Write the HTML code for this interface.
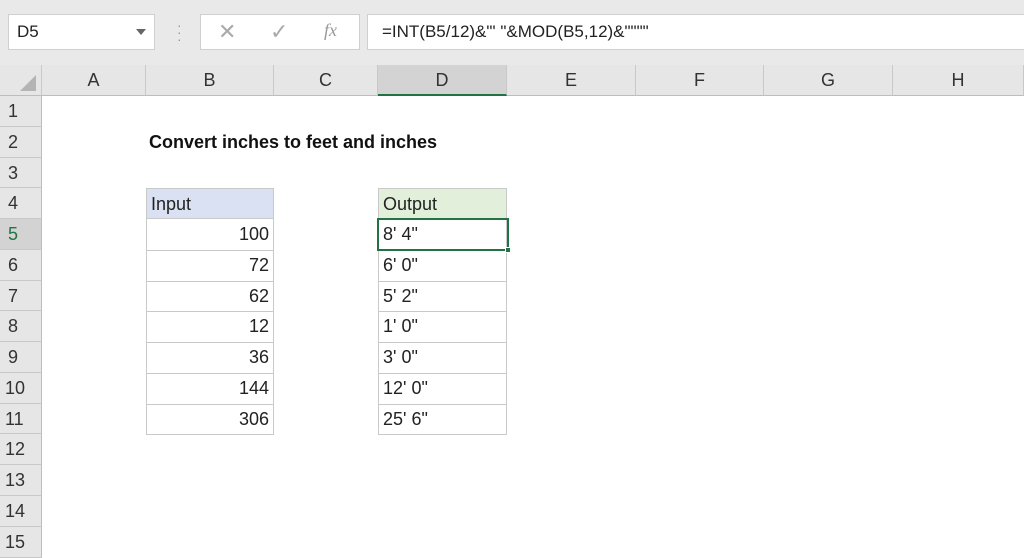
<!DOCTYPE html>
<html><head><meta charset="utf-8"><style>
*{margin:0;padding:0;box-sizing:border-box}
body{width:1024px;height:538px;overflow:hidden;background:#fff;font-family:"Liberation Sans",sans-serif;position:relative;color:#222}
.a{position:absolute}
.tb{left:0;top:0;width:1024px;height:65px;background:#e9e9e9}
.box{background:#fff;border:1px solid #d0d0d0}
.ch{top:65px;height:31px;background:#e6e6e6;border-right:1px solid #c8c8c8;border-bottom:1px solid #bdbdbd;text-align:center;line-height:31px;font-size:18px;color:#333}
.rh{left:0;width:42px;background:#e6e6e6;border-bottom:1px solid #c8c8c8;border-right:1px solid #bdbdbd;text-align:left;padding-left:8px;font-size:18px;color:#333}
.c{font-size:18px;border:1px solid #c9c9c9;padding:0 4px;color:#222}
.r{text-align:right}
</style></head><body>
<div class="a tb"></div>
<div class="a box" style="left:8px;top:14px;width:147px;height:36px;font-size:17px;line-height:34px;padding-left:8px">D5</div>
<div class="a" style="left:136px;top:29px;width:0;height:0;border-left:5px solid transparent;border-right:5px solid transparent;border-top:6px solid #666"></div>
<div class="a" style="left:177px;top:22px;color:#999;font-size:14px;line-height:7px">·<br>·<br>·</div>
<div class="a box" style="left:200px;top:14px;width:160px;height:36px"></div>
<div class="a" style="left:218px;top:19px;color:#aaa;font-size:22px">✕</div>
<div class="a" style="left:270px;top:19px;color:#aaa;font-size:22px">✓</div>
<div class="a" style="left:324px;top:20px;color:#999;font-size:18px;font-style:italic;font-family:'Liberation Serif',serif">fx</div>
<div class="a box" style="left:367px;top:14px;width:660px;height:36px;font-size:17px;line-height:34px;padding-left:14px">=INT(B5/12)&amp;"' "&amp;MOD(B5,12)&amp;""""</div>
<div class="a ch" style="left:0;width:42px"></div>
<div class="a" style="left:20px;top:75px;width:0;height:0;border-left:16px solid transparent;border-bottom:16px solid #b4b4b4"></div>
<div class="a ch" style="left:42px;width:104px">A</div>
<div class="a ch" style="left:146px;width:128px">B</div>
<div class="a ch" style="left:274px;width:104px">C</div>
<div class="a ch" style="left:378px;width:129px;background:#d3d3d3;border-bottom:2px solid #217346">D</div>
<div class="a ch" style="left:507px;width:129px">E</div>
<div class="a ch" style="left:636px;width:128px">F</div>
<div class="a ch" style="left:764px;width:129px">G</div>
<div class="a ch" style="left:893px;width:131px">H</div>
<div class="a rh" style="top:96px;height:31px;line-height:31px">1</div>
<div class="a rh" style="top:127px;height:31px;line-height:31px">2</div>
<div class="a rh" style="top:158px;height:30px;line-height:30px">3</div>
<div class="a rh" style="top:188px;height:31px;line-height:31px">4</div>
<div class="a rh" style="top:219px;height:31px;line-height:31px;background:#d3d3d3;color:#217346">5</div>
<div class="a rh" style="top:250px;height:31px;line-height:31px">6</div>
<div class="a rh" style="top:281px;height:30px;line-height:30px">7</div>
<div class="a rh" style="top:311px;height:31px;line-height:31px">8</div>
<div class="a rh" style="top:342px;height:31px;line-height:31px">9</div>
<div class="a rh" style="top:373px;height:31px;line-height:31px;padding-left:5px">10</div>
<div class="a rh" style="top:404px;height:30px;line-height:30px;padding-left:5px">11</div>
<div class="a rh" style="top:434px;height:31px;line-height:31px;padding-left:5px">12</div>
<div class="a rh" style="top:465px;height:31px;line-height:31px;padding-left:5px">13</div>
<div class="a rh" style="top:496px;height:31px;line-height:31px;padding-left:5px">14</div>
<div class="a rh" style="top:527px;height:31px;line-height:31px;padding-left:5px">15</div>
<div class="a" style="left:149px;top:132px;font-size:18px;font-weight:bold;color:#111">Convert inches to feet and inches</div>

<div class="a c" style="left:146px;top:188px;width:128px;height:31px;line-height:31px;background:#d9e1f2">Input</div>
<div class="a c r" style="left:146px;top:219px;width:128px;height:32px;line-height:31px;border-top:0">100</div>
<div class="a c r" style="left:146px;top:250px;width:128px;height:32px;line-height:31px;border-top:0">72</div>
<div class="a c r" style="left:146px;top:281px;width:128px;height:31px;line-height:30px;border-top:0">62</div>
<div class="a c r" style="left:146px;top:311px;width:128px;height:32px;line-height:31px;border-top:0">12</div>
<div class="a c r" style="left:146px;top:342px;width:128px;height:32px;line-height:31px;border-top:0">36</div>
<div class="a c r" style="left:146px;top:373px;width:128px;height:32px;line-height:31px;border-top:0">144</div>
<div class="a c r" style="left:146px;top:404px;width:128px;height:31px;line-height:30px;border-top:0">306</div>

<div class="a c" style="left:378px;top:188px;width:129px;height:31px;line-height:31px;background:#e2efda">Output</div>
<div class="a c" style="left:378px;top:219px;width:129px;height:32px;line-height:31px;border-top:0">8' 4"</div>
<div class="a c" style="left:378px;top:250px;width:129px;height:32px;line-height:31px;border-top:0">6' 0"</div>
<div class="a c" style="left:378px;top:281px;width:129px;height:31px;line-height:30px;border-top:0">5' 2"</div>
<div class="a c" style="left:378px;top:311px;width:129px;height:32px;line-height:31px;border-top:0">1' 0"</div>
<div class="a c" style="left:378px;top:342px;width:129px;height:32px;line-height:31px;border-top:0">3' 0"</div>
<div class="a c" style="left:378px;top:373px;width:129px;height:32px;line-height:31px;border-top:0">12' 0"</div>
<div class="a c" style="left:378px;top:404px;width:129px;height:31px;line-height:30px;border-top:0">25' 6"</div>
<div class="a" style="left:377px;top:218px;width:132px;height:33px;border:2px solid #217346"></div>
<div class="a" style="left:505px;top:247px;width:6px;height:6px;background:#217346;border:1px solid #fff"></div>
</body></html>
